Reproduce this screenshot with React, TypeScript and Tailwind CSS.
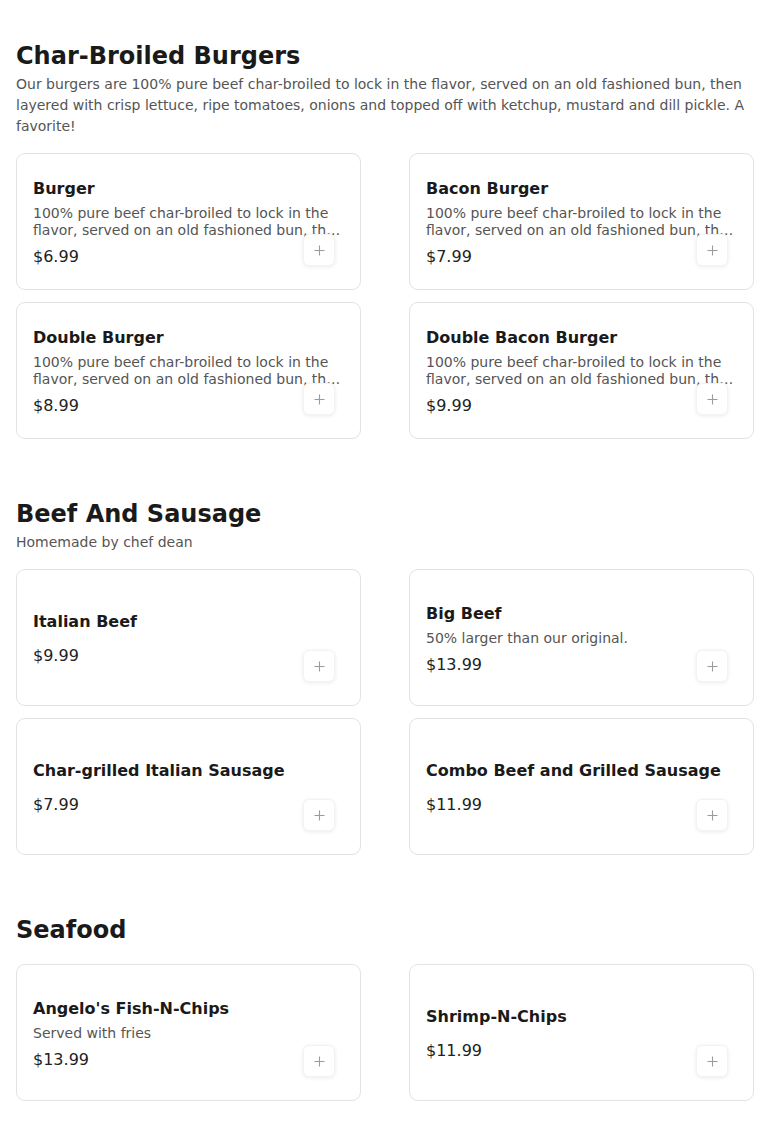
import React from "react";

type Item = { name: string; desc?: string; price: string };
type Section = { title: string; desc?: string; items: Item[] };

const burgerDesc =
  "100% pure beef char-broiled to lock in the flavor, served on an old fashioned bun, then layered with crisp lettuce, ripe tomatoes, onions and topped off with ketchup, mustard and dill pickle.";

const sections: Section[] = [
  {
    title: "Char-Broiled Burgers",
    desc: "Our burgers are 100% pure beef char-broiled to lock in the flavor, served on an old fashioned bun, then layered with crisp lettuce, ripe tomatoes, onions and topped off with ketchup, mustard and dill pickle. A favorite!",
    items: [
      { name: "Burger", desc: burgerDesc, price: "$6.99" },
      { name: "Bacon Burger", desc: burgerDesc, price: "$7.99" },
      { name: "Double Burger", desc: burgerDesc, price: "$8.99" },
      { name: "Double Bacon Burger", desc: burgerDesc, price: "$9.99" },
    ],
  },
  {
    title: "Beef And Sausage",
    desc: "Homemade by chef dean",
    items: [
      { name: "Italian Beef", price: "$9.99" },
      { name: "Big Beef", desc: "50% larger than our original.", price: "$13.99" },
      { name: "Char-grilled Italian Sausage", price: "$7.99" },
      { name: "Combo Beef and Grilled Sausage", price: "$11.99" },
    ],
  },
  {
    title: "Seafood",
    items: [
      { name: "Angelo's Fish-N-Chips", desc: "Served with fries", price: "$13.99" },
      { name: "Shrimp-N-Chips", price: "$11.99" },
    ],
  },
];

function PlusIcon() {
  return (
    <svg width="11" height="11" viewBox="0 0 11 11" fill="none">
      <path d="M5.5 0.5V10.5M0.5 5.5H10.5" stroke="#9a9a9a" strokeWidth="1.1" />
    </svg>
  );
}

function Card({ item }: { item: Item }) {
  return (
    <div className="relative h-[137px] rounded-[9px] border border-[#e3e3e3] bg-white px-4 pt-[3px] flex flex-col justify-center">
      <div className="text-[16px] leading-[24px] font-bold text-[#1a1a1a] mb-1">{item.name}</div>
      {item.desc && (
        <div className="text-[14px] leading-[17px] text-[#555555] line-clamp-2">{item.desc}</div>
      )}
      <div className="text-[16px] leading-[24px] text-[#222222] mt-1.5">{item.price}</div>
      <button className="absolute right-[25px] bottom-[23px] w-8 h-8 rounded-md bg-white border border-[#f3f3f3] shadow-[0_1px_4px_rgba(0,0,0,0.08)] flex items-center justify-center">
        <PlusIcon />
      </button>
    </div>
  );
}

export default function App() {
  const margins = ["", "mt-[59px]", "mt-[59px]"];
  return (
    <div
      className="bg-white min-h-[1122px] px-4 pt-[40px] pb-6"
      style={{ fontFamily: '"DejaVu Sans", Verdana, sans-serif' }}
    >
      {sections.map((s, i) => (
        <section key={s.title} className={margins[i]}>
          <h2 className="text-[24px] leading-[32px] font-bold text-[#1a1a1a]">{s.title}</h2>
          {s.desc && (
            <p className="mt-0.5 text-[14px] leading-[21px] text-[#555555]">{s.desc}</p>
          )}
          <div className={`grid grid-cols-2 gap-x-12 gap-y-3 ${s.desc ? "mt-4" : "mt-[18px]"}`}>
            {s.items.map((it) => (
              <Card key={it.name} item={it} />
            ))}
          </div>
        </section>
      ))}
    </div>
  );
}
